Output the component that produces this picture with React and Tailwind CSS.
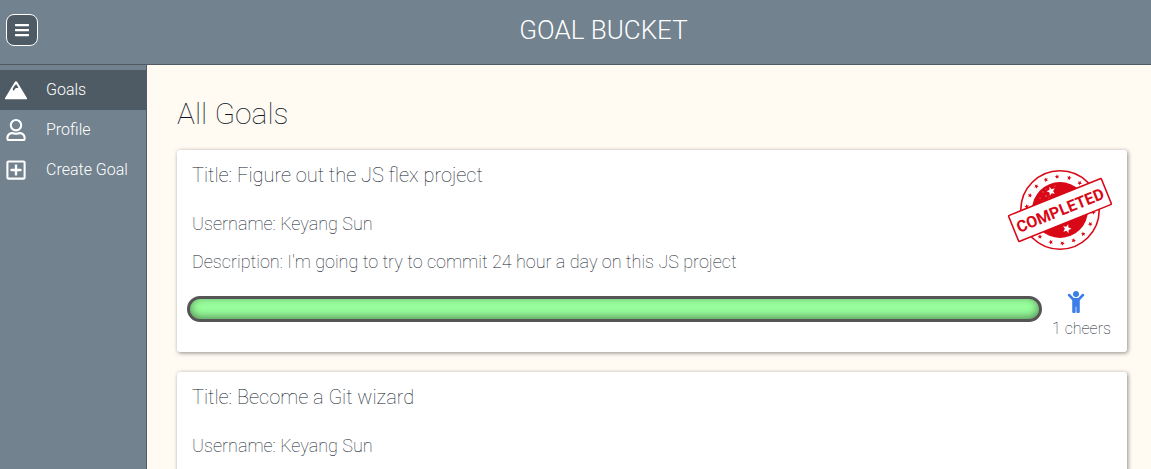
import { FaBars, FaChild, FaRegUser, FaRegPlusSquare } from "react-icons/fa";

const goals = [
  {
    title: "Figure out the JS flex project",
    user: "Keyang Sun",
    description: "I'm going to try to commit 24 hour a day on this JS project",
    cheers: 1,
    progress: 100,
  },
  {
    title: "Become a Git wizard",
    user: "Keyang Sun",
  },
];

function MountainIcon() {
  return (
    <svg viewBox="0 0 24 20" className="h-5 w-6 fill-white" aria-hidden="true">
      <path
        fillRule="evenodd"
        d="M12 1.2c.5 0 .8.2 1.1.6l9.8 16.1c.4.7.1 1.3-.7 1.3H1.8c-.8 0-1.1-.6-.7-1.3L10.9 1.8c.3-.4.6-.6 1.1-.6ZM12.3 4.6c-1 .2-1.6.9-2.1 1.7L8.6 9.1l1 1.9 1.8-2.4c.3-.4.7-.5 1.1-.5h2l-1.2-2.4c-.2-.5-.5-1-1-1.1Z"
      />
    </svg>
  );
}

const star = "M0-2.4.6-.8 2.3-.7 1 .5 1.4 2.1 0 1.2-1.4 2.1-1 .5-2.3-.7-.6-.8Z";
const rim = [-174, -154, -135, -115, -95, -74, -54, 4, 25, 46, 66, 86, 106, 127];

function CompletedStamp() {
  return (
    <svg viewBox="0 0 106 84" className="h-[84px] w-[106px]" role="img" aria-label="Completed">
      <circle cx="53" cy="42" r="39.2" fill="none" stroke="#d90816" strokeWidth="1.6" />
      <circle cx="53" cy="42" r="28" fill="#d90816" />
      {rim.map((a) => (
        <path
          key={a}
          d={star}
          fill="#d90816"
          transform={`translate(${53 + 33.5 * Math.cos((a * Math.PI) / 180)} ${42 + 33.5 * Math.sin((a * Math.PI) / 180)}) rotate(${a + 90})`}
        />
      ))}
      <path d={star} fill="#fff" transform="translate(44 23) rotate(-20) scale(1.9)" />
      <path d={star} fill="#fff" transform="translate(60 61) rotate(160) scale(1.9)" />
      <g fill="#fff" opacity=".6">
        <circle cx="36" cy="24" r=".6" />
        <circle cx="39" cy="28" r=".7" />
        <circle cx="33" cy="30" r=".6" />
        <circle cx="48" cy="18" r=".5" />
        <circle cx="36" cy="33" r=".5" />
        <circle cx="42" cy="30" r=".5" />
        <circle cx="39" cy="21" r=".5" />
      </g>
      <g transform="translate(53 42) rotate(-22)">
        <rect x="-50" y="-14" width="100" height="28" rx="1" fill="#fff" stroke="#d90816" strokeWidth="1.6" />
        <text
          y="6"
          textAnchor="middle"
          fill="#d90816"
          className="font-[Roboto,sans-serif] text-[16px] font-bold"
        >
          COMPLETED
        </text>
      </g>
    </svg>
  );
}

function NavItem({ icon, label, active }) {
  return (
    <a
      href="#"
      aria-current={active ? "page" : undefined}
      className={`flex h-10 items-center text-base font-light text-white ${active ? "bg-[#4f5b64]" : ""}`}
    >
      <span className="ml-1 mr-[18px] flex w-6 justify-center">{icon}</span>
      {label}
    </a>
  );
}

function GoalCard({ goal }) {
  return (
    <article className="min-h-[202px] rounded-[3px] bg-white px-2.5 pb-1.5 pt-2.5 shadow-[1px_1px_4px_rgba(0,0,0,0.45)]">
      <div className="flex justify-between">
        <div className="px-[5px]">
          <h2 className="text-xl leading-[30px]">Title: {goal.title}</h2>
          <p className="mt-5 text-lg leading-7">Username: {goal.user}</p>
          {goal.description && (
            <p className="mt-2.5 text-lg leading-7">Description: {goal.description}</p>
          )}
        </div>
        {goal.progress === 100 && (
          <div className="mr-1 mt-2">
            <CompletedStamp />
          </div>
        )}
      </div>
      {goal.progress !== undefined && (
        <div className="mt-3.5 flex">
          <div
            role="progressbar"
            aria-label="Progress"
            aria-valuenow={goal.progress}
            className="mt-1.5 h-[26px] grow rounded-full border-[3px] border-[#555] bg-[#98ff9c] shadow-[inset_0_-2px_8px_rgba(0,0,0,0.45)]"
          />
          <div className="flex w-[75px] flex-col items-center pl-2.5 pr-1.5">
            <button type="button" aria-label="Cheer" className="mr-3 flex h-6 items-center text-[#3b7de9]">
              <FaChild size={22} />
            </button>
            <span className="whitespace-nowrap text-base leading-[30px]">{goal.cheers} cheers</span>
          </div>
        </div>
      )}
    </article>
  );
}

export default function App() {
  return (
    <div className="flex h-screen flex-col overflow-hidden bg-[#fffaf2] font-[Roboto,sans-serif] font-thin text-[#0c1628]">
      <header className="flex h-[65px] shrink-0 items-start border-b border-[#4f5b64] bg-[#72828e] px-1.5 pt-3.5 text-white">
        <button
          type="button"
          aria-label="Menu"
          className="flex size-8 items-center justify-center rounded-lg border border-white bg-[#4f5b64]"
        >
          <FaBars size={16} />
        </button>
        <h1 className="grow pl-6 text-center text-[26px] font-light leading-8">GOAL BUCKET</h1>
      </header>
      <div className="flex min-h-0 grow">
        <nav className="w-[147px] shrink-0 border-r border-[#4f5b64] bg-[#72828e] pt-[5px]">
          <NavItem icon={<MountainIcon />} label="Goals" active />
          <NavItem icon={<FaRegUser size={22} />} label="Profile" />
          <NavItem icon={<FaRegPlusSquare size={22} />} label="Create Goal" />
        </nav>
        <main className="min-w-0 grow overflow-hidden pl-[30px] pr-6 pt-[29px]">
          <h1 className="text-3xl leading-10">All Goals</h1>
          <div className="mt-4 flex flex-col gap-5">
            {goals.map((g) => (
              <GoalCard key={g.title} goal={g} />
            ))}
          </div>
        </main>
      </div>
    </div>
  );
}
